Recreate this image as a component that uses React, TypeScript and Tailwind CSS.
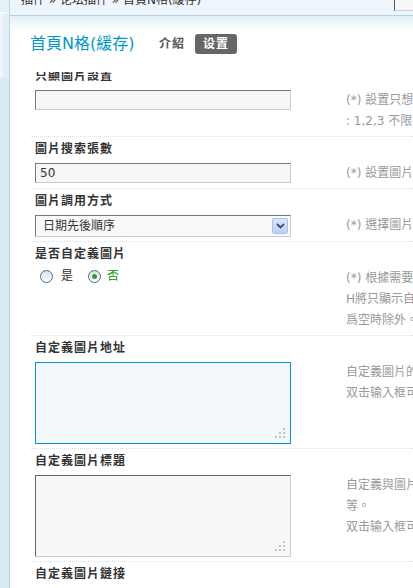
import React from "react";

const FONT = '"DejaVu Sans", "Noto Sans CJK TC", sans-serif';

// one form row: dotted rule, bold label, then field + grey tips side by side
const Row: React.FC<{ label: string; tips?: string[]; children?: React.ReactNode }> = ({
  label,
  tips,
  children,
}) => (
  <div className="border-t border-dotted border-[#cfe3f1] pl-[5px] pt-[2px] pb-[4px]">
    <div className="h-[20px] whitespace-nowrap text-[12px] font-bold leading-[20px] tracking-[1px] text-[#333]">
      {label}
    </div>
    {(children || tips) && (
      <div className="mt-[4px] flex items-start">
        <div className="w-[256px] shrink-0">{children}</div>
        {tips && (
          <div className="ml-[55px] shrink-0 whitespace-nowrap text-[12px] leading-[21px] text-[#999]">
            {tips.map((t, i) => (
              <div key={i}>{t}</div>
            ))}
          </div>
        )}
      </div>
    )}
  </div>
);

const Grip = () => (
  <svg className="absolute bottom-[4px] right-[4px]" width="11" height="11" viewBox="0 0 11 11">
    <rect x="8" y="0" width="2" height="2" fill="#c4c4c4" />
    <rect x="4" y="4" width="2" height="2" fill="#c4c4c4" />
    <rect x="8" y="4" width="2" height="2" fill="#c4c4c4" />
    <rect x="0" y="8" width="2" height="2" fill="#c4c4c4" />
    <rect x="4" y="8" width="2" height="2" fill="#c4c4c4" />
    <rect x="8" y="8" width="2" height="2" fill="#c4c4c4" />
  </svg>
);

const Radio: React.FC<{ checked?: boolean }> = ({ checked }) => (
  <span className="flex h-[13px] w-[13px] items-center justify-center rounded-full border border-[#49698c] bg-[linear-gradient(#d9e1ea,#ffffff)]">
    {checked && <span className="h-[5px] w-[5px] rounded-full bg-[#2ba52b]" />}
  </span>
);

export default function App() {
  return (
    <div className="flex h-[588px] w-[413px] overflow-hidden bg-white" style={{ fontFamily: FONT }}>
      {/* left menu strip */}
      <div className="flex w-[10px] shrink-0 flex-col border-r border-[#b9d3e1] bg-[#dbebf5]">
        <div className="h-[12px] bg-[#e6f1f9]" />
        <div className="h-[2px] bg-[#f6fafd]" />
        <div className="flex h-[64px]">
          <div className="w-[3px] bg-[#eef5fb]" />
          <div className="flex-1 bg-[#e2eff8]" />
        </div>
      </div>

      <div className="flex min-w-0 flex-1 flex-col">
        {/* breadcrumb bar */}
        <div className="flex h-[16px] shrink-0 overflow-hidden border-b border-[#b4d3e2] bg-[#eff6fb]">
          <div className="-mt-[10px] whitespace-nowrap pl-[11px] text-[12px] leading-[20px] text-[#333]">
            插件 » 论坛插件 » 首頁N格(緩存)
          </div>
          <div className="ml-auto h-[11px] w-[19px] shrink-0 border-b border-l border-b-[#ccc] border-l-[#555] bg-[#f7f7f7]" />
        </div>

        {/* title + tabs */}
        <div className="bg-[linear-gradient(#e0eef7,#ffffff_14px)] pt-[18px]">
          <div className="flex h-[20px] items-center pl-[20px]">
            <span className="w-[102px] shrink-0 whitespace-nowrap text-[16px] leading-[20px] text-[#0099cc]">首頁N格(緩存)</span>
            <span className="ml-[27px] text-[12px] font-bold tracking-[1px] text-[#555]">介紹</span>
            <span className="ml-[10px] h-[20px] rounded-[3px] bg-[#666] px-[8px] text-[12px] font-bold leading-[20px] tracking-[1px] text-white">
              设置
            </span>
          </div>
        </div>

        {/* settings form, scrolled */}
        <div className="mt-[18px] min-h-0 flex-1 overflow-hidden">
          <div className="-mt-[9px] pl-[20px]">
            <Row label="只顯圖片設置" tips={["(*) 設置只想顯示的圖片編號，多個用逗號隔開，例如", ": 1,2,3 不限制請留空"]}>
              <div className="h-[20px] border border-[#777] border-b-[#ccc] border-r-[#ccc] bg-[#f6f6f6]" />
            </Row>

            <Row label="圖片搜索張數" tips={["(*) 設置圖片搜索的張數"]}>
              <div className="h-[20px] border border-[#777] border-b-[#ccc] border-r-[#ccc] bg-[#f6f6f6] pl-[4px] text-[12px] leading-[18px] text-[#333]">
                50
              </div>
            </Row>

            <Row label="圖片調用方式" tips={["(*) 選擇圖片的調用方式"]}>
              <div className="flex h-[22px] items-center border border-[#777] border-b-[#ccc] border-r-[#ccc] bg-[#f9f9f9] pl-[7px] pr-[2px]">
                <span className="flex-1 text-[12px] leading-[20px] text-[#333]">日期先後順序</span>
                <span className="flex h-[16px] w-[16px] items-center justify-center rounded-[2px] border border-[#a9c0ea] bg-[linear-gradient(#dbe6fa,#bcd0f3)]">
                  <svg width="9" height="6" viewBox="0 0 9 6">
                    <path d="M1 1l3.5 3.5L8 1" fill="none" stroke="#3c4f73" strokeWidth="1.8" />
                  </svg>
                </span>
              </div>
            </Row>

            <Row
              label="是否自定義圖片"
              tips={["(*) 根據需要選擇是否自定義圖片，選擇是的話首頁N格", "H將只顯示自定義的圖片，自定義圖片地址", "爲空時除外。"]}
            >
              <div className="flex h-[16px] items-center pl-[5px] text-[12px]">
                <Radio />
                <span className="ml-[8px] text-[#333]">是</span>
                <span className="ml-[15px]">
                  <Radio checked />
                </span>
                <span className="ml-[6px] text-[#009900]">否</span>
              </div>
            </Row>

            <Row label="自定義圖片地址" tips={["自定義圖片的地址，一行一個", "双击输入框可扩大/缩小"]}>
              <div className="relative h-[82px] border border-[#0099cc] bg-[#f3f7fc]">
                <Grip />
              </div>
            </Row>

            <Row label="自定義圖片標題" tips={["自定義與圖片地址對應的標題，例如圖片1標題", "等。", "双击输入框可扩大/缩小"]}>
              <div className="relative h-[82px] border border-[#666] border-b-[#ccc] border-r-[#ccc] bg-[#f7f7f7]">
                <Grip />
              </div>
            </Row>

            <Row label="自定義圖片鏈接" />
          </div>
        </div>
      </div>
    </div>
  );
}
